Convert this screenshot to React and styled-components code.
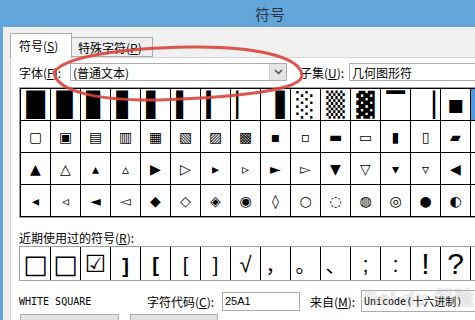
import React from 'react';
import styled, { createGlobalStyle } from 'styled-components';

const Global = createGlobalStyle`
  html, body { margin: 0; padding: 0; }
  body {
    width: 475px; height: 320px; overflow: hidden; background: #f0f0f0;
    font-family: "Noto Sans CJK SC", "Noto Sans", sans-serif;
  }
`;

const Window = styled.div`
  position: relative;
  width: 475px;
  height: 320px;
  overflow: hidden;
  background: #62a6da;
  display: flex;
  flex-direction: column;
`;

const TitleBar = styled.div`
  flex: none;
  height: 27px;
  display: flex;
  align-items: center;
  justify-content: center;
  padding-left: 65px;
  font-size: 15px;
  color: #2b3744;
`;

const Body = styled.div`
  flex: 1;
  margin-left: 3px;
  background: #f0f0f0;
  padding: 6px 0 0 7px;
  display: flex;
  flex-direction: column;
  min-width: 0;
`;

const Tabs = styled.div`
  display: flex;
  align-items: flex-end;
  height: 24px;
  flex: none;
`;

const Tab = styled.div`
  box-sizing: border-box;
  height: ${p => (p.$active ? '25px' : '20px')};
  width: ${p => p.$w}px;
  margin-bottom: ${p => (p.$active ? '-1px' : '0')};
  border: 1px solid #acacac;
  border-bottom: ${p => (p.$active ? 'none' : '1px solid #acacac')};
  border-left: ${p => (p.$active ? '1px solid #acacac' : 'none')};
  background: ${p => (p.$active ? '#ffffff' : '#f0f0f0')};
  position: relative;
  z-index: ${p => (p.$active ? 1 : 0)};
  display: flex;
  align-items: center;
  padding-left: ${p => (p.$active ? '8px' : '6px')};
  padding-bottom: ${p => (p.$active ? '2px' : '0')};
  font-size: 12px;
  color: #000;
  white-space: nowrap;
`;

const Panel = styled.div`
  flex: 1;
  background: #ffffff;
  border-top: 1px solid #d9d9d9;
  border-left: 1px solid #d9d9d9;
  padding: 5px 0 0 8px;
  display: flex;
  flex-direction: column;
  min-width: 0;
`;

const Row = styled.div`
  display: flex;
  align-items: center;
  height: ${p => p.$h || 18}px;
  margin-top: ${p => p.$mt || 0}px;
  flex: none;
  white-space: nowrap;
`;

const Label = styled.div`
  flex: none;
  width: ${p => p.$w}px;
  margin-left: ${p => p.$ml || 0}px;
  font-size: 12px;
  color: #000;
  white-space: nowrap;
`;

const Field = styled.div`
  box-sizing: border-box;
  flex: none;
  width: ${p => p.$w}px;
  height: ${p => p.$h || 18}px;
  border: 1px solid #abadb3;
  background: ${p => p.$bg || '#ffffff'};
  display: flex;
  align-items: center;
  padding-left: 2px;
  font-size: ${p => p.$fs || 12}px;
  color: #000;
  font-family: ${p => p.$font || '"Noto Sans CJK SC", sans-serif'};
  overflow: hidden;
  white-space: nowrap;
`;

const FieldText = styled.span`
  flex: 1;
`;

const Han = styled.span`
  font-family: "Noto Sans CJK SC", sans-serif;
  font-size: 11px;
`;

const DropButton = styled.div`
  box-sizing: border-box;
  flex: none;
  width: 17px;
  height: 16px;
  background: #e5e5e5;
  border-left: 1px solid #d4d4d4;
  display: flex;
  align-items: center;
  justify-content: center;
`;

const SymbolFrame = styled.div`
  flex: none;
  align-self: flex-start;
  margin-top: ${p => p.$mt || 0}px;
  border: 1px solid #a0a0a0;
  padding-left: ${p => p.$pl || 0}px;
  width: max-content;
`;

const SymbolGrid = styled.div`
  display: grid;
  grid-template-columns: repeat(16, 30px);
  border-top: ${p => (p.$lined ? '1px solid #000' : 'none')};
  border-left: ${p => (p.$lined ? '1px solid #000' : 'none')};
`;

const Cell = styled.div`
  box-sizing: border-box;
  width: 30px;
  height: ${p => p.$h}px;
  border-right: 1px solid #000;
  border-bottom: ${p => (p.$nobottom ? 'none' : '1px solid #000')};
  display: flex;
  align-items: center;
  justify-content: center;
  overflow: hidden;
  background: ${p => (p.$sel ? '#4b9be6' : '#ffffff')};
  color: ${p => (p.$sel ? '#ffffff' : '#000000')};
  font-family: ${p => p.$font || '"DejaVu Sans", sans-serif'};
  font-size: ${p => p.$size || 14}px;
  font-weight: ${p => (p.$bold ? 700 : 400)};
  padding-top: ${p => p.$dy || 0}px;
  line-height: normal;
`;

const RecentLabel = styled.div`
  margin-top: 12px;
  height: 16px;
  line-height: 16px;
  font-size: 12px;
  color: #000;
  flex: none;
`;

const CharName = styled.div`
  flex: none;
  width: 128px;
  font-family: "DejaVu Sans Mono", monospace;
  font-size: 10px;
  color: #000;
`;

const Button = styled.div`
  box-sizing: border-box;
  flex: none;
  width: ${p => p.$w}px;
  height: 23px;
  margin-left: ${p => p.$ml || 0}px;
  border: 1px solid #adadad;
  background: #e1e1e1;
  display: flex;
  align-items: center;
  justify-content: center;
  font-size: 12px;
`;

const Annotation = styled.svg`
  position: absolute;
  left: 0;
  top: 0;
  pointer-events: none;
`;

const Watermark = styled.div`
  position: absolute;
  left: 364px;
  top: 283px;
  font-family: "Liberation Sans", "Noto Sans CJK SC", sans-serif;
  font-size: 19px;
  font-weight: 700;
  color: transparent;
  -webkit-text-stroke: 1px rgba(150, 150, 150, 0.3);
  letter-spacing: 1px;
  white-space: nowrap;
  pointer-events: none;
`;

const B = 24;
const G = 14;
const grid = [
  [
    { c: '█', s: B }, { c: '▉', s: B }, { c: '▊', s: B }, { c: '▋', s: B },
    { c: '▌', s: B }, { c: '▍', s: B }, { c: '▎', s: B }, { c: '▏', s: B },
    { c: '▐', s: B }, { c: '░', s: B }, { c: '▒', s: B }, { c: '▓', s: B },
    { c: '▔', s: B }, { c: '▕', s: B }, { c: '■', s: 17 }, { c: '□', s: 17, sel: true },
  ],
  '▢▣▤▥▦▧▨▩▪▫▬▭▮▯▰▱'.split('').map(c => ({ c, s: G })),
  '▲△▴▵▶▷▸▹►▻▼▽▾▿◀◁'.split('').map(c => ({ c, s: G })),
  '◂◃◄◅◆◇◈◉◊○◌◍◎●◐◑'.split('').map(c => ({ c, s: G })),
];

const CJK = '"Noto Sans CJK SC", sans-serif';
const LAT = '"Liberation Sans", sans-serif';
const recent = [
  { c: '□', s: 26 },
  { c: '□', s: 26, b: true },
  { c: '☑', s: 24 },
  { c: ']', s: 20, b: true, f: LAT, dy: 6 },
  { c: '[', s: 20, b: true, f: LAT, dy: 4 },
  { c: '[', s: 20, f: LAT, dy: 4 },
  { c: ']', s: 20, f: LAT, dy: 4 },
  { c: '√', s: 22, f: LAT, dy: 2 },
  { c: '，', s: 20, f: CJK, dy: 2 },
  { c: '。', s: 20, f: CJK, dy: 2 },
  { c: '、', s: 20, f: CJK, dy: 2 },
  { c: ';', s: 22, f: LAT, dy: 2 },
  { c: ':', s: 22, f: LAT, dy: 2 },
  { c: '!', s: 30, f: LAT },
  { c: '?', s: 30, f: LAT },
  { c: '', s: 14 },
];

const A = ({ k }) => <u>{k}</u>;

export default function App() {
  return (
    <>
      <Global />
      <Window>
        <TitleBar>符号</TitleBar>
        <Body>
          <Tabs>
            <Tab $active $w={62}>符号(<A k="S" />)</Tab>
            <Tab $w={81}>特殊字符(<A k="P" />)</Tab>
          </Tabs>
          <Panel>
            <Row $h={18}>
              <Label $w={51}>字体(<A k="F" />):</Label>
              <Field $w={217}>
                <FieldText>(普通文本)</FieldText>
                <DropButton>
                  <svg width="9" height="6" viewBox="0 0 9 6">
                    <polyline points="1,1 4.5,4.5 8,1" fill="none" stroke="#4d4d4d" strokeWidth="1.5" />
                  </svg>
                </DropButton>
              </Field>
              <Label $w={49} $ml={13}>子集(<A k="U" />):</Label>
              <Field $w={140}>几何图形符</Field>
            </Row>

            <SymbolFrame $mt={6}>
              <SymbolGrid $lined>
                {grid.map((row, ri) =>
                  row.map((it, ci) => (
                    <Cell key={`${ri}-${ci}`} $h={32} $size={it.s} $sel={it.sel}>
                      {it.c}
                    </Cell>
                  ))
                )}
              </SymbolGrid>
            </SymbolFrame>

            <RecentLabel>近期使用过的符号(<A k="R" />):</RecentLabel>
            <SymbolFrame $mt={0} $pl={1}>
              <SymbolGrid>
                {recent.map((it, i) => (
                  <Cell key={i} $h={33} $nobottom $size={it.s} $bold={it.b} $font={it.f} $dy={it.dy}>
                    {it.c}
                  </Cell>
                ))}
              </SymbolGrid>
            </SymbolFrame>

            <Row $h={22} $mt={9}>
              <CharName>WHITE SQUARE</CharName>
              <Label $w={75}>字符代码(<A k="C" />):</Label>
              <Field $w={78} $h={19} $fs={11} $font={'"Liberation Sans", sans-serif'}>25A1</Field>
              <Label $w={51} $ml={10}>来自(<A k="M" />):</Label>
              <Field $w={130} $h={22} $bg="#fbfbfb" $fs={10} $font={'"DejaVu Sans Mono", monospace'}>
                Unicode(<Han>十六进制</Han>)
              </Field>
            </Row>

            <Row $h={23} $mt={2}>
              <Button $w={99} $ml={1}>自动更正(<A k="A" />)...</Button>
              <Button $w={88} $ml={11}>快捷键(<A k="K" />)...</Button>
              <Label $w={120} $ml={11}>快捷键: 25A1, Alt+X</Label>
            </Row>
          </Panel>
        </Body>

        <Watermark>Bai du 经验</Watermark>
        <Annotation width="475" height="320" viewBox="0 0 475 320">
          <path
            d="M 54 72 C 67 55, 128 48, 190 47 C 252 46, 300 56, 302 75 C 303 90, 240 97, 160 100 C 100 101, 56 92, 54 72 Z"
            fill="none"
            stroke="#d8423c"
            strokeWidth="3"
            strokeOpacity="0.9"
          />
        </Annotation>
      </Window>
    </>
  );
}
